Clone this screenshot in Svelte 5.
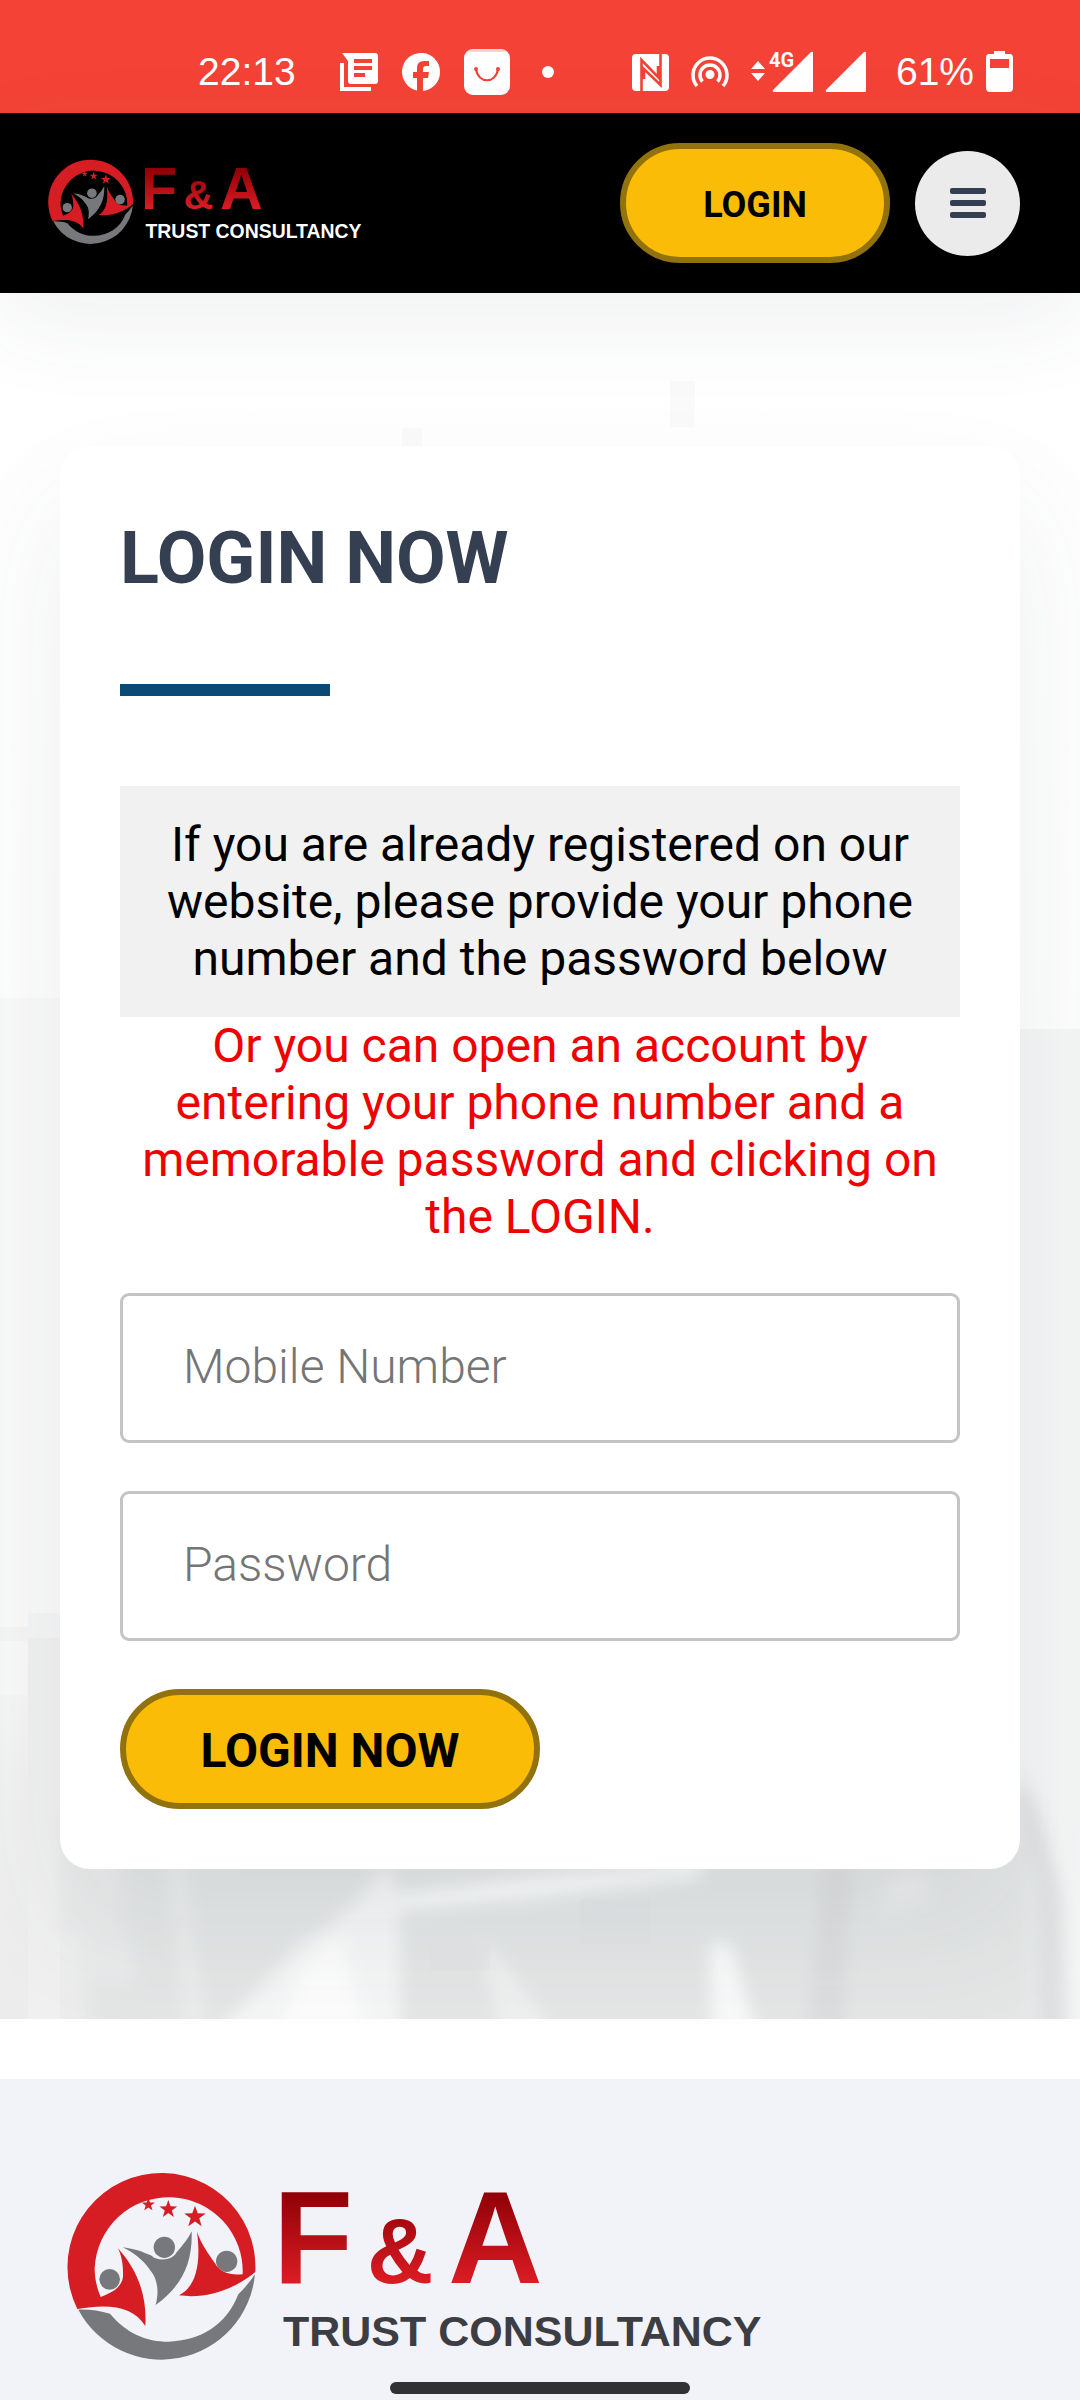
<script>
    let phone = $state('');
    let password = $state('');
    let menuOpen = $state(false);

    function handleLogin(event) {
        event.preventDefault();
    }

    function toggleMenu() {
        menuOpen = !menuOpen;
    }
</script>

{#snippet star(x, y, r)}
    <path
        transform="translate({x} {y}) scale({r})"
        d="M0-1 .24-.32.95-.31.38.12.59.81 0 .4-.59.81-.38.12-.95-.31-.24-.32Z"
    />
{/snippet}

{#snippet logo(id)}
    <svg class="logo" viewBox="0 0 700 190" role="img" aria-label="F & A Trust Consultancy">
        <defs>
            <linearGradient id={id} gradientUnits="userSpaceOnUse" x1="0" y1="18" x2="0" y2="109">
                <stop offset="0" stop-color="#8f0006" />
                <stop offset="1" stop-color="#dc1c24" />
            </linearGradient>
        </defs>
        <g transform="translate(-7 -9) scale(.3333)">
            <g fill="#d71d24">
                <path d="M52 432A282 282 0 1 1 586 321C520 375 440 402 357 391C400 370 426 310 411 200C425 240 445 265 465 295C480 322 510 332 548 328A222 222 0 1 0 104 310C104 340 110 368 122 396C150 385 185 370 189 335C190 300 185 270 173 249C230 310 262 390 256 483C220 425 150 415 52 432Z" />
                {@render star(265, 119, 21)}
                {@render star(325, 133, 28)}
                {@render star(405, 156, 34)}
            </g>
            <g fill="#77787b">
                <path d="M188 247C240 254 252 264 275 272C290 288 335 290 350 262C370 240 385 220 395 199C398 290 370 360 287 420C300 370 288 335 270 315C250 285 220 262 188 247Z" />
                <path d="M55 434C90 433 120 438 150 446C200 506 260 530 325 530C420 528 500 480 535 388Q562 362 585 328A282 282 0 0 1 55 434Z" />
                <circle cx="149" cy="343" r="31" />
                <circle cx="313" cy="247" r="32" />
                <circle cx="500" cy="289" r="32" />
            </g>
        </g>
        <text class="initial" x="206" y="109" fill="url(#{id})">F</text>
        <text class="amp" x="300" y="109" fill="url(#{id})">&amp;</text>
        <text class="initial" x="381" y="109" fill="url(#{id})">A</text>
        <text class="tagline" x="216" y="172">TRUST CONSULTANCY</text>
    </svg>
{/snippet}

<div class="status-bar">
    <div class="status-left">
        <span class="status-text">22:13</span>
        <svg class="news" width="38" height="38" viewBox="0 0 38 38">
            <path fill="#fff" fill-rule="evenodd" d="M2 0H35Q38 0 38 3V28Q38 31 35 31H11Q8 31 8 28V8ZM14 6V10H32V6ZM14 13V17H32V13ZM14 20V24H25V20Z" />
            <path d="M2 10V36H31" fill="none" stroke="#fff" stroke-width="4" />
        </svg>
        <svg width="38" height="38" viewBox="0 0 38 38">
            <path fill="#fff" d="M38 19A19 19 0 1 0 15 37.500V25H11V19H15V15Q15 8 22 8H27V13H24Q21 13 21 16V19H27L26 25H21V38A19 19 0 0 0 38 19Z" />
        </svg>
        <svg class="bag" width="46" height="46" viewBox="0 0 46 46">
            <rect width="46" height="46" rx="9" fill="#fff" />
            <path d="M4 3Q6 0 10 0H36Q40 0 42 3Z" fill="#fbb5b0" opacity=".6" />
            <path d="M12 20C14 35 32 35 34 20" fill="none" stroke="#f44336" stroke-width="2" />
            <circle cx="12" cy="20" r="2" fill="#f44336" />
            <circle cx="34" cy="20" r="2" fill="#f44336" />
        </svg>
        <span class="dot"></span>
    </div>
    <div class="status-right">
        <svg class="nfc" width="37" height="37" viewBox="0 0 37 37">
            <rect width="37" height="37" rx="4" fill="#fff" />
            <path d="M9.500 37V6L26 23V12M28.500 0V31L12 15V25" fill="none" stroke="#f44336" stroke-width="2.600" />
        </svg>
        <svg class="hotspot" width="38" height="34" viewBox="0 0 38 34">
            <g fill="none" stroke="#fff" stroke-width="3.500">
                <path d="M6 31A17 17 0 1 1 32 31" />
                <path d="M11.500 26.500A10 10 0 1 1 26.500 26.500" />
            </g>
            <circle cx="19" cy="19.500" r="4.500" fill="#fff" />
        </svg>
        <svg class="signal" width="62" height="42" viewBox="0 0 62 42">
            <path fill="#fff" d="M0 18 7 10 14 18ZM0 22H14L7 30ZM60 1Q62 0 62 2V40Q62 41 61 41H23Q21 41 22 39Z" />
            <text class="network" x="18" y="16">4G</text>
        </svg>
        <svg class="signal" width="41" height="42" viewBox="0 0 41 42">
            <path fill="#fff" d="M39 1Q41 0 41 2V40Q41 41 40 41H2Q0 41 1 39Z" />
        </svg>
        <span class="status-text battery-level">61%</span>
        <svg width="27" height="42" viewBox="0 0 27 42">
            <path fill="#fff" fill-rule="evenodd" d="M8 0H19V3H24Q27 3 27 7V37Q27 41 23 41H4Q0 41 0 37V7Q0 3 3 3H8ZM4 8V17H23V8Z" />
        </svg>
    </div>
</div>

<header class="navbar">
    <a class="brand" href="#home">
        {@render logo('brand-top')}
    </a>
    <div class="nav-actions">
        <a class="btn btn-nav" href="#login">LOGIN</a>
        <button class="menu-toggle" type="button" aria-label="Menu" aria-expanded={menuOpen} onclick={toggleMenu}>
            <span></span>
            <span></span>
            <span></span>
        </button>
    </div>
</header>

<main>
    <section class="login-section" id="login">
        <svg class="backdrop" viewBox="0 0 1080 1726" preserveAspectRatio="none" aria-hidden="true">
            <defs>
                <linearGradient id="wall" x1="0" y1="0" x2="0" y2="1">
                    <stop offset="0" stop-color="#fff" />
                    <stop offset=".4" stop-color="#fdfdfd" />
                    <stop offset=".75" stop-color="#fafafa" />
                    <stop offset=".86" stop-color="#f1f1f1" />
                    <stop offset="1" stop-color="#ececec" />
                </linearGradient>
                <linearGradient id="desk" x1="0" y1="0" x2="0" y2="1">
                    <stop offset="0" stop-color="#e3e4e5" />
                    <stop offset=".5" stop-color="#e3e5e5" />
                    <stop offset="1" stop-color="#e4e5e5" />
                </linearGradient>
                <filter id="soft" x="-20%" y="-20%" width="140%" height="140%">
                    <feGaussianBlur stdDeviation="8" />
                </filter>
            </defs>
            <rect width="1080" height="1726" fill="url(#wall)" />
            <rect y="705" width="60" height="640" fill="#f9f9f9" />
            <rect x="1020" y="736" width="60" height="990" fill="#f4f5f5" />
            <rect y="1334" width="28" height="14" fill="#f4f4f4" />
            <rect x="28" y="1345" width="32" height="381" fill="#f0f0f0" />
            <rect x="28" y="1320" width="32" height="25" fill="#f4f5f5" />
            <rect y="1348" width="27" height="54" fill="#f8f8f8" />
            <g filter="url(#soft)">
                <path d="M60 1520H120V1600H134V1640H160V1740H80V1640H60Z" fill="#e9eaea" />
                <path d="M120 1500H1030V1740H90V1690H134V1640H120Z" fill="url(#desk)" />
                <path d="M165 1530H178L206 1740H186Z" fill="#ebecec" />
                <path d="M400 1602 520 1586 700 1570V1584L540 1604 400 1616Z" fill="#fafbfc" />
                <path d="M400 1602V1740H215L275 1680 300 1650 330 1632 365 1600 385 1575Z" fill="#f4f5f5" />
                <path d="M300 1680 340 1640 365 1740H280Z" fill="#fcfcfc" />
                <path d="M480 1645 500 1665 556 1740H500Z" fill="#eeefef" />
                <path d="M710 1650H730L756 1740H712Z" fill="#f8f9f9" />
                <path d="M826 1530H856L842 1740H808Z" fill="#dcddde" />
                <path d="M882 1595 905 1575 930 1585V1606L885 1622Z" fill="#e9eaea" />
                <path d="M1018 1470 1040 1520 1062 1600 1068 1740H1034V1590Z" fill="#dfe0e1" />
                <path d="M1022 1430 1042 1480 1064 1570 1070 1740H1100V1430Z" fill="#f4f5f5" />
            </g>
            <g fill="#fafafa">
                <rect x="402" y="135" width="20" height="18" />
                <rect x="670" y="88" width="25" height="46" />
            </g>
            <g fill="#dcdedf">
                <rect x="240" y="1530" width="120" height="54" opacity=".3" />
                <rect x="580" y="1606" width="70" height="46" opacity=".2" />
                <rect x="430" y="1652" width="60" height="26" opacity=".2" />
            </g>
        </svg>

        <div class="card">
            <h1>LOGIN NOW</h1>
            <div class="rule"></div>
            <p class="notice">If you are already registered on our website, please provide your phone number and the password below</p>
            <p class="hint">Or you can open an account by entering your phone number and a memorable password and clicking on the LOGIN.</p>
            <form onsubmit={handleLogin}>
                <input type="tel" placeholder="Mobile Number" aria-label="Mobile Number" bind:value={phone} />
                <input type="password" placeholder="Password" aria-label="Password" bind:value={password} />
                <button class="btn btn-submit" type="submit">LOGIN NOW</button>
            </form>
        </div>
    </section>
</main>

<footer>
    {@render logo('brand-bottom')}
</footer>

<div class="home-indicator"></div>

<style>
    :global(body) {
        margin: 0;
        background: #fff;
        font-family: Roboto, sans-serif;
    }

    .status-bar {
        display: flex;
        justify-content: space-between;
        height: 113px;
        padding: 30px 67px 0 198px;
        box-sizing: border-box;
        background: #f44336;
        color: #fff;
    }

    .status-left,
    .status-right {
        display: flex;
        align-items: center;
        height: 84px;
    }

    .status-left {
        gap: 24px;
    }

    .status-right {
        gap: 12px;
    }

    .status-text {
        font-family: "Liberation Sans", sans-serif;
        font-size: 39px;
        line-height: 48px;
    }

    .news {
        margin-left: 20px;
    }

    .dot {
        width: 12px;
        height: 12px;
        margin-left: 8px;
        border-radius: 50%;
        background: #fff;
    }

    .hotspot {
        margin: 0 10px;
    }

    .signal {
        overflow: visible;
    }

    .battery-level {
        margin-left: 18px;
    }

    .network {
        font-size: 20px;
        font-weight: 700;
        fill: #fff;
    }

    .navbar {
        position: relative;
        z-index: 1;
        display: flex;
        align-items: center;
        justify-content: space-between;
        height: 180px;
        padding: 0 60px 0 48px;
        box-sizing: border-box;
        background: #000;
        box-shadow: 0 30px 90px rgba(60, 72, 88, 0.08);
    }

    .logo {
        display: block;
        overflow: visible;
        font-family: "Liberation Sans", sans-serif;
        font-weight: 700;
    }

    .initial {
        font-size: 131px;
    }

    .amp {
        font-size: 92px;
    }

    .tagline {
        font-size: 43px;
        fill: #3c3e43;
    }

    .brand .logo {
        width: 316px;
        height: 86px;
    }

    .brand .tagline {
        fill: #fff;
    }

    .nav-actions {
        display: flex;
        align-items: center;
        gap: 25px;
    }

    .btn {
        display: flex;
        align-items: center;
        justify-content: center;
        height: 120px;
        padding: 3px 0 0;
        box-sizing: border-box;
        border: 6px solid #92720c;
        border-radius: 60px;
        background: #fbbc07;
        color: #000;
        font-family: inherit;
        font-weight: 700;
        text-decoration: none;
        cursor: pointer;
    }

    .btn-nav {
        width: 270px;
        font-size: 36px;
    }

    .btn-submit {
        width: 420px;
        font-size: 48px;
    }

    .menu-toggle {
        display: flex;
        flex-direction: column;
        align-items: center;
        justify-content: center;
        gap: 6px;
        width: 105px;
        height: 105px;
        padding: 0;
        border: none;
        border-radius: 50%;
        background: #ebebeb;
        cursor: pointer;
    }

    .menu-toggle span {
        width: 36px;
        height: 6px;
        border-radius: 2px;
        background: #333f50;
    }

    .login-section {
        position: relative;
        padding: 153px 60px 150px;
    }

    .backdrop {
        position: absolute;
        inset: 0;
        width: 100%;
        height: 100%;
    }

    .card {
        position: relative;
        padding: 60px;
        border-radius: 30px;
        background: #fff;
        box-shadow: 0 60px 120px rgba(60, 72, 88, 0.08);
    }

    h1 {
        margin: 0;
        color: #343f52;
        font-size: 72px;
        font-weight: 700;
        line-height: 106px;
    }

    .rule {
        width: 210px;
        height: 12px;
        margin: 72px 0 90px;
        background: #0a4a75;
    }

    p {
        margin: 0;
        font-size: 48px;
        line-height: 57px;
        text-align: center;
    }

    .notice {
        padding: 30px;
        background: #f1f1f1;
        color: #000;
    }

    .hint {
        color: #f00000;
    }

    form {
        display: flex;
        flex-direction: column;
        gap: 48px;
        margin-top: 48px;
    }

    input {
        width: 100%;
        height: 150px;
        padding: 0 60px 3px;
        box-sizing: border-box;
        border: 3px solid #c4c4c4;
        border-radius: 9px;
        background: #fff;
        color: #343f52;
        font-family: inherit;
        font-size: 48px;
        font-weight: 300;
        outline: none;
    }

    input::placeholder {
        color: #757575;
        opacity: 1;
    }

    input:focus {
        border-color: #0a4a75;
    }

    footer {
        position: relative;
        margin-top: 60px;
        padding: 95px 67px 36px;
        background: #f2f3f8;
    }

    footer .logo {
        width: 700px;
        height: 190px;
    }

    .home-indicator {
        position: fixed;
        bottom: 6px;
        left: 50%;
        width: 300px;
        height: 12px;
        margin-left: -150px;
        border-radius: 6px;
        background: #303234;
    }
</style>
